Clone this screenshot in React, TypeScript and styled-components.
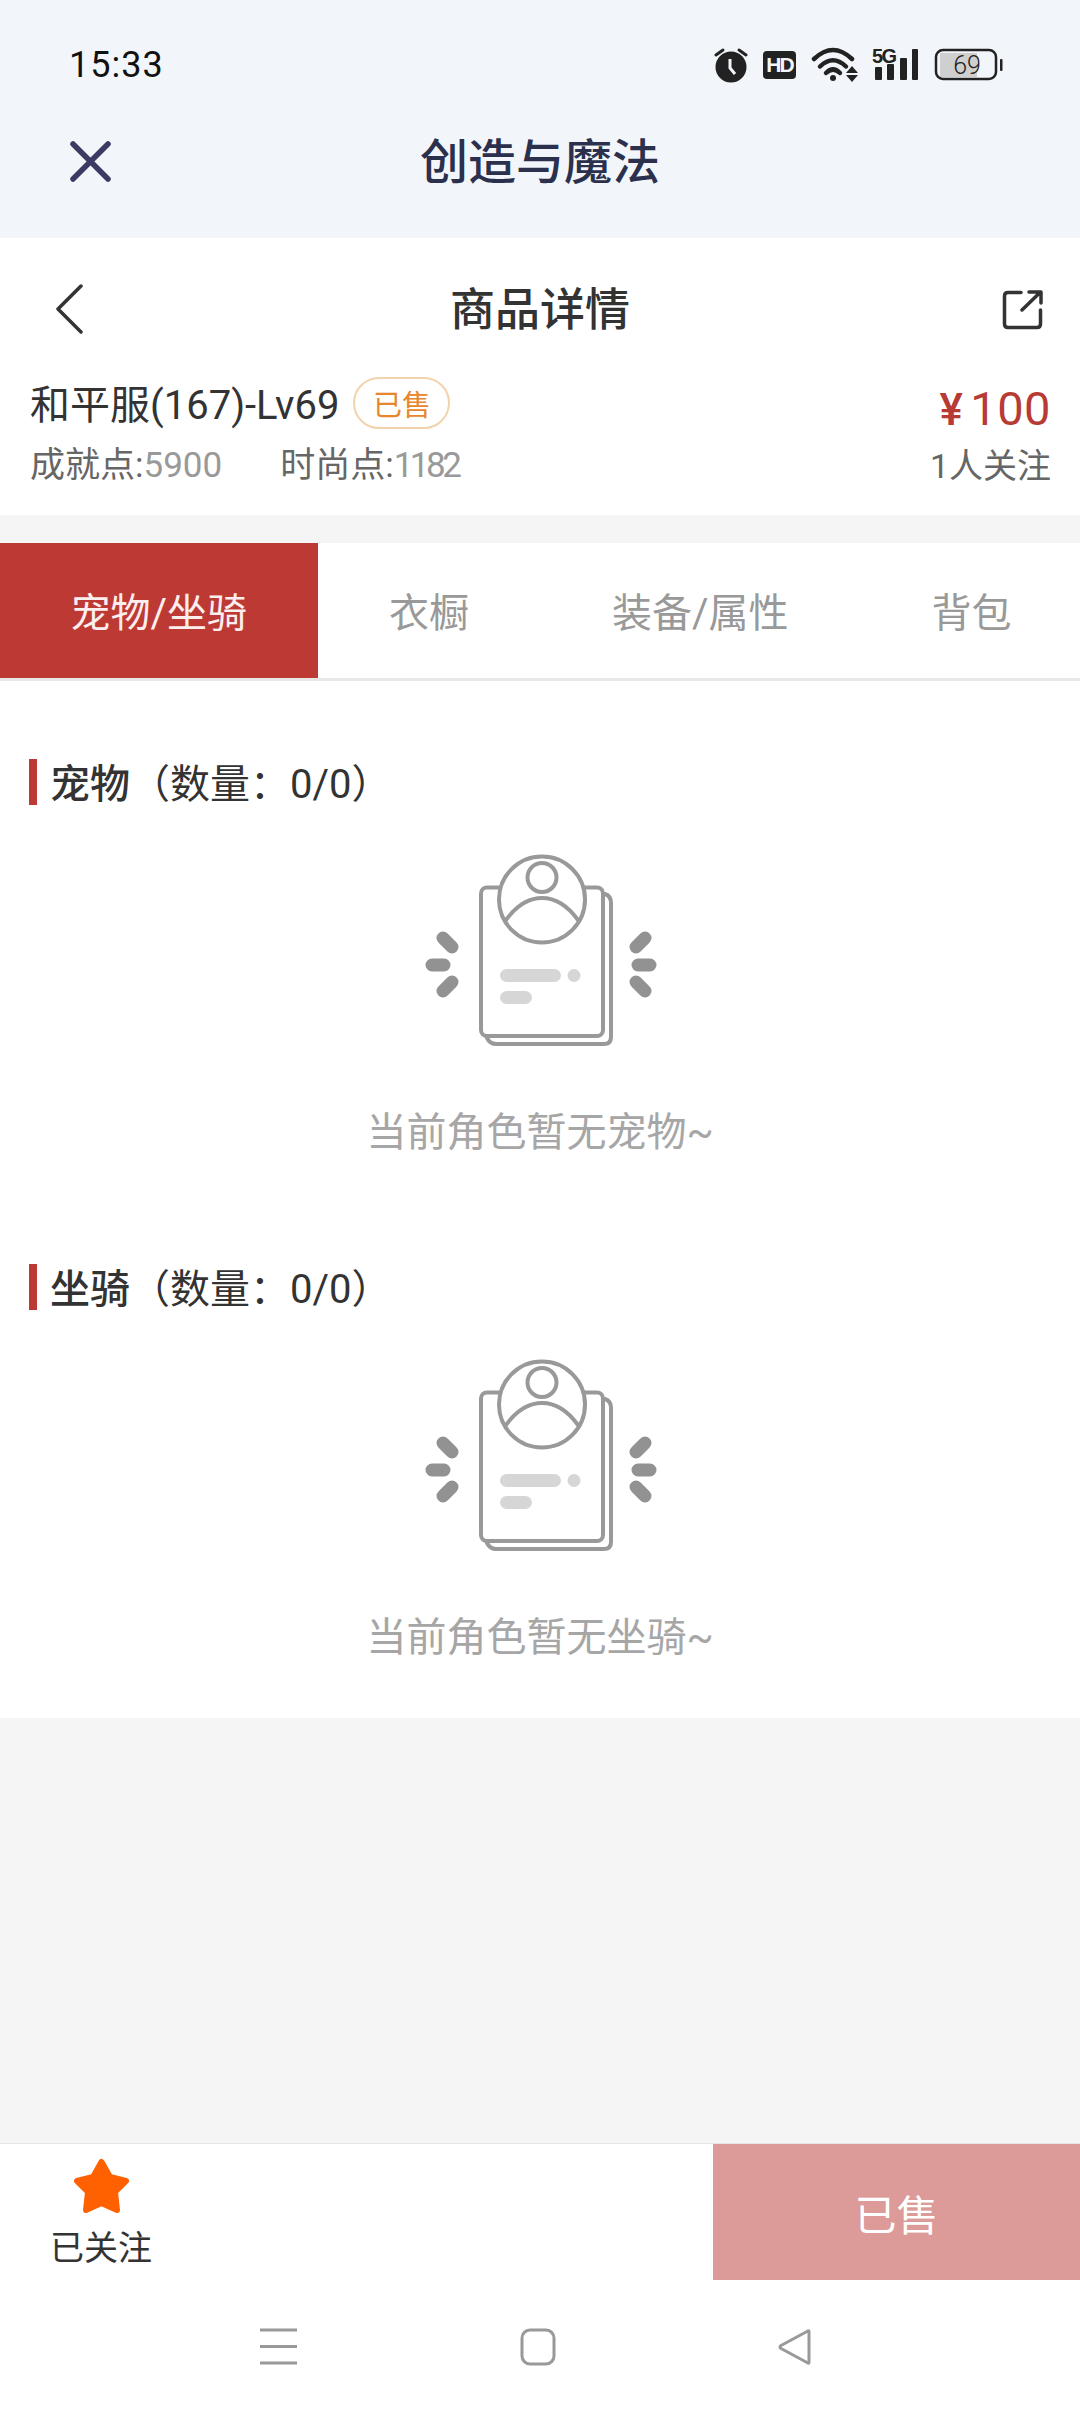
import styled, { createGlobalStyle } from "styled-components";

const GlobalStyle = createGlobalStyle`
  html, body {
    margin: 0;
    padding: 0;
    background: #f5f5f5;
    font-family: Roboto, "Noto Sans CJK SC", sans-serif;
  }
  * {
    box-sizing: border-box;
  }
`;

const Page = styled.div`
  width: 1080px;
  height: 2414px;
  display: flex;
  flex-direction: column;
  overflow: hidden;
  background: #f5f5f5;
`;

const AppHeader = styled.header`
  height: 238px;
  background: #f2f6fa;
`;

const StatusBar = styled.div`
  height: 130px;
  padding: 0 77px 0 69px;
  display: flex;
  align-items: center;
  justify-content: space-between;
`;

const Time = styled.span`
  font-size: 36px;
  font-weight: 400;
  letter-spacing: 1px;
  color: #111;
`;

const StatusIcons = styled.div`
  display: flex;
  align-items: center;
  gap: 14px;
  height: 36px;
`;

const HdBadge = styled.span`
  width: 33px;
  height: 28px;
  margin-left: 1px;
  border-radius: 4px;
  background: #222;
  display: flex;
  align-items: center;
  justify-content: center;
  font-family: "Liberation Sans", sans-serif;
  font-size: 21px;
  font-weight: 700;
  letter-spacing: -2px;
  color: #f2f6fa;
`;

const SignalGroup = styled.div`
  position: relative;
  width: 48px;
  height: 36px;
`;

const NetworkLabel = styled.span`
  position: absolute;
  top: 0;
  left: 0;
  line-height: 18px;
  font-family: "Liberation Sans", sans-serif;
  font-size: 20px;
  font-weight: 700;
  letter-spacing: -1.5px;
  color: #222;
`;

const WebBar = styled.div`
  height: 60px;
  padding-left: 70px;
  display: grid;
  grid-template-columns: 1fr auto 1fr;
  align-items: center;
`;

const WebTitle = styled.h1`
  margin: 0;
  padding: 3px 70px 0 0;
  line-height: 60px;
  font-size: 48px;
  font-weight: 500;
  color: #2b304d;
`;

const DetailNav = styled.nav`
  height: 139px;
  padding: 3px 37px 0 55px;
  background: #fff;
  display: grid;
  grid-template-columns: 1fr auto 1fr;
  align-items: center;
`;

const NavTitle = styled.h2`
  margin: 0;
  padding: 3px 18px 0 0;
  line-height: 60px;
  font-size: 45px;
  font-weight: 500;
  color: #333;
`;

const ShareSlot = styled.div`
  display: flex;
  justify-content: flex-end;
`;

const Summary = styled.section`
  padding: 0 29px 27px 30px;
  background: #fff;
  margin-bottom: 28px;
`;

const SummaryRow = styled.div`
  display: flex;
  align-items: center;
  justify-content: space-between;
`;

const NameGroup = styled.div`
  display: flex;
  align-items: center;
  gap: 14px;
  height: 52px;
`;

const Name = styled.span`
  height: 52px;
  padding-top: 3px;
  line-height: 52px;
  font-size: 40px;
  color: #333;
`;

const SoldBadge = styled.span`
  width: 97px;
  height: 52px;
  border: 2px solid #f2d3ad;
  border-radius: 26px;
  display: flex;
  align-items: center;
  justify-content: center;
  font-size: 29px;
  color: #e8862c;
`;

const Price = styled.span`
  height: 52px;
  padding-top: 6px;
  line-height: 52px;
  font-size: 47px;
  letter-spacing: 0.5px;
  color: #b83a34;
`;

const Yen = styled.span`
  margin-right: 7px;
  font-size: 44px;
  font-weight: 500;
`;

const Stats = styled.div`
  display: flex;
  gap: 58px;
  margin-top: 15px;
  line-height: 44px;
  font-size: 35px;
  color: #666;
`;

const StatValue = styled.span<{ $tight?: boolean }>`
  color: #999;
  letter-spacing: ${(p) => (p.$tight ? "-3.5px" : "0")};
`;

const Followers = styled.span`
  margin-top: 15px;
  line-height: 44px;
  font-size: 34px;
  color: #666;
`;

const Tabs = styled.div`
  height: 138px;
  display: flex;
  background: #fff;
  border-bottom: 3px solid #e8e8e8;
  overflow: hidden;
`;

const Tab = styled.div<{ $active?: boolean }>`
  flex: none;
  padding: 0 ${(p) => (p.$active ? "70.5px" : "71.5px")} 2px;
  height: 135px;
  display: flex;
  align-items: center;
  font-size: 40px;
  color: ${(p) => (p.$active ? "#fbeeee" : "#999")};
  background: ${(p) => (p.$active ? "#bd3934" : "transparent")};
`;

const Content = styled.main`
  padding: 78px 0 55px;
  background: #fff;
  display: flex;
  flex-direction: column;
  gap: 106px;
`;

const Section = styled.section`
  display: flex;
  flex-direction: column;
  align-items: center;
`;

const SectionTitle = styled.h3`
  align-self: stretch;
  margin: 0 0 25px 29px;
  height: 46px;
  padding: 0 0 2px 13px;
  border-left: 8px solid #bd3934;
  display: flex;
  align-items: center;
  font-size: 40px;
  font-weight: 400;
  color: #333;
`;

const TitleStrong = styled.span`
  font-weight: 500;
`;

const EmptyText = styled.p`
  margin: 48px 0 0;
  line-height: 50px;
  font-size: 40px;
  color: #a6a6a6;
`;

const Spacer = styled.div`
  flex: 1;
`;

const BottomBar = styled.footer`
  height: 136px;
  display: flex;
  justify-content: space-between;
  background: #fff;
  box-shadow: 0 -1px 0 #e6e6e6;
`;

const FollowButton = styled.div`
  width: 202px;
  padding-top: 14px;
  display: flex;
  flex-direction: column;
  align-items: center;
`;

const FollowLabel = styled.span`
  margin-top: 11px;
  line-height: 46px;
  font-size: 34px;
  color: #333;
`;

const SoldButton = styled.div`
  width: 367px;
  display: flex;
  align-items: center;
  justify-content: center;
  font-size: 42px;
  color: #fff;
  background: #dc9a98;
`;

const SystemNav = styled.div`
  height: 134px;
  padding-top: 48px;
  background: #fff;
  display: flex;
  align-items: flex-start;
`;

const NavIconSlot = styled.div<{ $left: number }>`
  margin-left: ${(p) => p.$left}px;
  display: flex;
`;

function AlarmIcon() {
  return (
    <svg width="34" height="36" viewBox="0 0 34 36">
      <circle cx="17" cy="20" r="15.5" fill="#222" />
      <path d="M2 8l7-5M25 3l7 5" stroke="#222" strokeWidth="3" strokeLinecap="round" />
      <path d="M16 12v9l5 6" fill="none" stroke="#f2f6fa" strokeWidth="3" />
    </svg>
  );
}

function WifiIcon() {
  return (
    <svg width="48" height="36" viewBox="0 0 48 36">
      <g fill="none" stroke="#222" strokeWidth="4.5" strokeLinecap="round">
        <path d="M4 12Q23-6 42 12" />
        <path d="M10 19.500Q23 7 36 19.500" />
        <path d="M16 26Q23 19 30 26" />
      </g>
      <circle cx="23" cy="31" r="3" fill="#222" />
      <path d="M36 26l6-7 6 7zM36 28h12l-6 7z" fill="#222" />
    </svg>
  );
}

function SignalBars() {
  return (
    <svg width="48" height="36" viewBox="0 0 48 36">
      <rect x="3" y="20" width="7" height="13" rx="1" fill="#222" />
      <rect x="15" y="17" width="7" height="16" rx="1" fill="#222" />
      <rect x="28" y="11" width="7" height="22" rx="1" fill="#222" />
      <rect x="40" y="2" width="6" height="31" rx="1" fill="#222" />
    </svg>
  );
}

function BatteryIcon() {
  return (
    <svg width="69" height="36" viewBox="0 0 69 36">
      <rect x="6" y="6" width="37" height="24" fill="#cfcfcf" />
      <rect x="2" y="3" width="60" height="29" rx="7" fill="none" stroke="#222" strokeWidth="2.5" />
      <rect x="66" y="12" width="2.5" height="12" rx="1" fill="#222" />
      <text
        x="33"
        y="27"
        textAnchor="middle"
        fontFamily="Roboto, sans-serif"
        fontWeight="300"
        fontSize="25"
        fill="#222"
      >
        69
      </text>
    </svg>
  );
}

function CloseIcon() {
  return (
    <svg width="41" height="41" viewBox="0 0 41 41">
      <path
        d="M3 3l35 35M38 3L3 38"
        stroke="#3b3a63"
        strokeWidth="5.5"
        strokeLinecap="round"
      />
    </svg>
  );
}

function BackIcon() {
  return (
    <svg width="28" height="50" viewBox="0 0 28 50" style={{ display: "block" }}>
      <path
        d="M26 2L3 25l23 23"
        fill="none"
        stroke="#333"
        strokeWidth="3.5"
        strokeLinecap="round"
        strokeLinejoin="round"
      />
    </svg>
  );
}

function ShareIcon() {
  return (
    <svg width="41" height="41" viewBox="0 0 41 41">
      <path
        d="M19 3.500H6Q2.500 3.500 2.500 7V35Q2.500 38.500 6 38.500H35Q38.500 38.500 38.500 35V21M20 21L38 3.500M27 3H39V14"
        fill="none"
        stroke="#333"
        strokeWidth="3.5"
        strokeLinecap="round"
        strokeLinejoin="round"
      />
    </svg>
  );
}

function EmptyIllustration() {
  return (
    <svg width="280" height="230" viewBox="0 0 280 230" style={{ display: "block" }}>
      <g fill="none" stroke="#999" strokeWidth="4" strokeLinecap="round">
        <path d="M205 64Q211 66 211 73V207Q211 214 204 214H96Q90 214 87 208" />
        <rect x="81" y="57.500" width="122" height="148.500" rx="6" fill="#fff" />
        <circle cx="142" cy="69.500" r="43" fill="#fff" />
        <circle cx="142" cy="47.500" r="14.500" />
        <path d="M106 90Q122 68 142 68T178 90" />
      </g>
      <g stroke="#929292" strokeLinecap="round" strokeWidth="13">
        <path d="M43 108l9 9M52 152l-9 9M245 108l-9 9M236 152l9 9" />
        <path d="M32 135h12M238 135h12" />
      </g>
      <g fill="#d6d6d6">
        <rect x="100" y="139" width="61" height="13" rx="6.500" />
        <circle cx="174" cy="145.500" r="6.500" />
        <rect x="100" y="161" width="32" height="13" rx="6.500" />
      </g>
    </svg>
  );
}

function StarIcon() {
  return (
    <svg width="59" height="56" viewBox="0 0 59 56" style={{ display: "block" }}>
      <path
        d="M29.500 4L38 19l16 4-11 11 2 18-15.500-7L14 52l2-18L5 23l16-4z"
        fill="#ff6000"
        stroke="#ff6000"
        strokeWidth="6"
        strokeLinejoin="round"
      />
    </svg>
  );
}

function EmptySection({ title, empty }: { title: string; empty: string }) {
  return (
    <Section>
      <SectionTitle>
        <TitleStrong>{title}</TitleStrong>（数量：0/0）
      </SectionTitle>
      <EmptyIllustration />
      <EmptyText>{empty}</EmptyText>
    </Section>
  );
}

function App() {
  return (
    <>
      <GlobalStyle />
      <Page>
        <AppHeader>
          <StatusBar>
            <Time>15:33</Time>
            <StatusIcons>
              <AlarmIcon />
              <HdBadge>HD</HdBadge>
              <WifiIcon />
              <SignalGroup>
                <SignalBars />
                <NetworkLabel>5G</NetworkLabel>
              </SignalGroup>
              <BatteryIcon />
            </StatusIcons>
          </StatusBar>
          <WebBar>
            <CloseIcon />
            <WebTitle>创造与魔法</WebTitle>
          </WebBar>
        </AppHeader>

        <DetailNav>
          <BackIcon />
          <NavTitle>商品详情</NavTitle>
          <ShareSlot>
            <ShareIcon />
          </ShareSlot>
        </DetailNav>

        <Summary>
          <SummaryRow>
            <NameGroup>
              <Name>和平服(167)-Lv69</Name>
              <SoldBadge>已售</SoldBadge>
            </NameGroup>
            <Price>
              <Yen>¥</Yen>100
            </Price>
          </SummaryRow>
          <SummaryRow>
            <Stats>
              <span>
                成就点:<StatValue>5900</StatValue>
              </span>
              <span>
                时尚点:<StatValue $tight>1182</StatValue>
              </span>
            </Stats>
            <Followers>1人关注</Followers>
          </SummaryRow>
        </Summary>

        <Tabs>
          <Tab $active>宠物/坐骑</Tab>
          <Tab>衣橱</Tab>
          <Tab>装备/属性</Tab>
          <Tab>背包</Tab>
        </Tabs>

        <Content>
          <EmptySection title="宠物" empty="当前角色暂无宠物~" />
          <EmptySection title="坐骑" empty="当前角色暂无坐骑~" />
        </Content>

        <Spacer />

        <BottomBar>
          <FollowButton>
            <StarIcon />
            <FollowLabel>已关注</FollowLabel>
          </FollowButton>
          <SoldButton>已售</SoldButton>
        </BottomBar>

        <SystemNav>
          <NavIconSlot $left={259}>
            <svg width="38" height="38" viewBox="0 0 38 38">
              <path d="M1 2h37M1 18.500h37M1 35h37" stroke="#999" strokeWidth="3" />
            </svg>
          </NavIconSlot>
          <NavIconSlot $left={223}>
            <svg width="36" height="38" viewBox="0 0 36 38">
              <rect x="2" y="2" width="32" height="34" rx="8" fill="none" stroke="#999" strokeWidth="3" />
            </svg>
          </NavIconSlot>
          <NavIconSlot $left={221}>
            <svg width="36" height="38" viewBox="0 0 36 38">
              <path
                d="M32 3.500V34.500Q32 36 30 34.500L4 20.500Q2 19 4 17.500L30 3.500Q32 2 32 3.500Z"
                fill="none"
                stroke="#999"
                strokeWidth="3"
                strokeLinejoin="round"
              />
            </svg>
          </NavIconSlot>
        </SystemNav>
      </Page>
    </>
  );
}

export default App;
